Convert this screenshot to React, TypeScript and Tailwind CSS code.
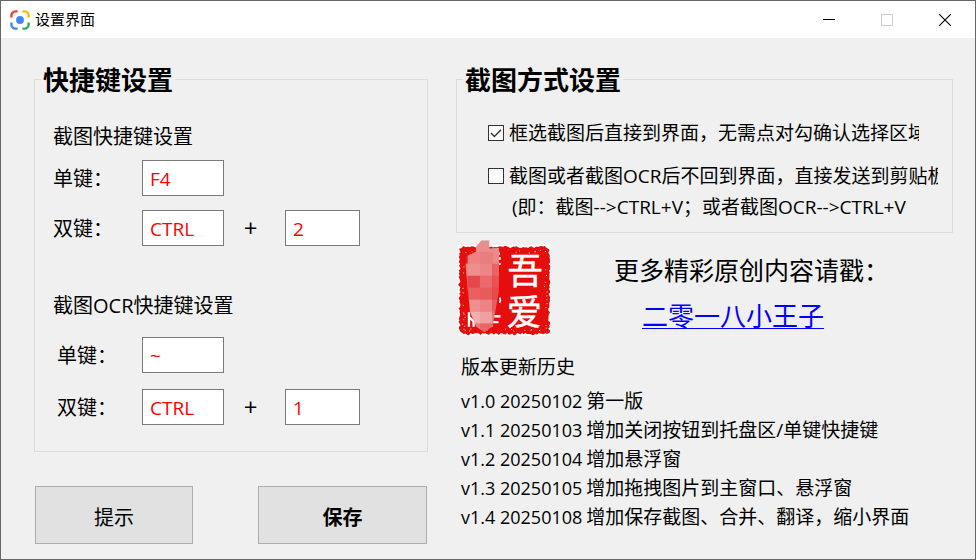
import React, { useState } from "react";

const textFont =
  "font-['Open_Sans','Noto_Sans_CJK_SC',sans-serif]";

function LensIcon() {
  return (
    <svg className="size-5 shrink-0" viewBox="0 0 20 20" fill="none" strokeWidth="2.4" aria-hidden="true">
      <path d="M1.4 7.4V5.4a4 4 0 0 1 4-4h2.2" stroke="#ea4335" />
      <path d="M12.4 1.4h2.2a4 4 0 0 1 4 4v2" stroke="#fbbc04" />
      <path d="M1.4 12.4v2.2a4 4 0 0 0 4 4h2.2" stroke="#4285f4" />
      <path d="M12.4 18.6h2.2a4 4 0 0 0 4-4v-2.2" stroke="#34a853" />
      <circle cx="10" cy="10" r="3.9" fill="#4285f4" />
    </svg>
  );
}

function noise(n: number) {
  const v = Math.sin(n * 12.9898) * 43758.5453;
  return v - Math.floor(v);
}

// Outline of the stamp, with an uneven carved edge.
function stampEdge() {
  const x0 = 25, y0 = 32, x1 = 302, y1 = 301;
  const pts: string[] = [];
  let n = 1;
  for (let x = x0 + 10; x < x1 - 8; x += 5) pts.push(`${x},${y0 + noise(n++) * 7}`);
  for (let y = y0 + 10; y < y1 - 8; y += 5) pts.push(`${x1 - noise(n++) * 7},${y}`);
  for (let x = x1 - 10; x > x0 + 8; x -= 5) pts.push(`${x},${y1 - noise(n++) * 7}`);
  for (let y = y1 - 10; y > y0 + 8; y -= 5) pts.push(`${x0 + noise(n++) * 7},${y}`);
  return pts.join(" ");
}

const specks = Array.from({ length: 46 }, (_, i) => {
  const t = noise(i + 700);
  const d = 8 + noise(i + 800) * 8;
  const side = i % 4;
  const x = side === 0 ? 28 + d : side === 1 ? 299 - d : 36 + t * 256;
  const y = side === 2 ? 36 + d : side === 3 ? 296 - d : 42 + t * 248;
  return { x, y };
});

const mosaic = [
  ["#e98e8e", "#e98e8e", "#e98e8e", "#e98e8e"],
  ["#e11b1b", "#ee8283", "#ea7d7e", "#ec8a8a"],
  ["#ee8787", "#ef8e8f", "#ee8485", "#e96465"],
  ["#ec7273", "#e6474a", "#ea6a6c", "#e85254"],
  ["#ec7e7f", "#ea5f61", "#e85a5c", "#e64a4c"],
  ["#ef9293", "#f08f90", "#ee8384", "#ea5c5e"],
  ["#f0a0a1", "#f2adae", "#f0a0a1", "#e97072"],
  ["#e85e60", "#ec7a7b", "#ea6567", "#e33b3d"],
];

function Stamp() {
  return (
    <svg className="h-24 w-[93px] shrink-0" viewBox="24 15 280 288" role="img" aria-label="吾爱">
      <defs>
        <clipPath id="smudge">
          <path d="M95 15h23v25l30-2-1 132-19 105-25 17-25-17-18-45-8-80-7-85 33-15V35z" />
        </clipPath>
      </defs>
      <rect x="24" y="30" width="279" height="273" fill="#fff" />
      <polygon points={stampEdge()} fill="#e60d0d" />
      {specks.map((s, i) => (
        <rect key={i} x={s.x} y={s.y} width="3" height="3" fill="#fbdcdc" />
      ))}
      <path d="M57 232v44M57 246l14 14v16M84 250v26M126 250v26M118 244h34M126 262h20" stroke="#fff" strokeWidth="7" fill="none" />
      <path d="M148 52v8M150 66v8M150 84v6M149 188q5 6 0 16" stroke="#fff" strokeWidth="5" fill="none" />
      <g clipPath="url(#smudge)">
        {mosaic.map((row, r) =>
          row.map((c, i) => (
            <rect key={`${r}-${i}`} x={16 + i * 37} y={14 + r * 36} width="38" height="37" fill={c} />
          ))
        )}
      </g>
      <g fill="#fff" stroke="#fff" strokeWidth="1.5" fontSize="106" fontWeight="400" className={textFont}>
        <text x="173" y="146">吾</text>
        <text x="171" y="271">爱</text>
      </g>
    </svg>
  );
}

function KeyInput({ label, value, narrow }: { label: string; value: string; narrow?: boolean }) {
  return (
    <input
      aria-label={label}
      defaultValue={value}
      className={`h-9 border border-[#7a7a7a] bg-white px-[7px] pt-0.5 text-[19px] text-[#ff0000] outline-none ${narrow ? "w-[75px]" : "w-[82px]"}`}
    />
  );
}

function KeyRow({ name, keys, indent }: { name: string; keys: string[]; indent?: boolean }) {
  return (
    <div className="flex items-center">
      <span className={`w-[89px] shrink-0 pt-0.5 text-[20px] leading-7 ${indent ? "pl-1" : ""}`}>{name}</span>
      <KeyInput label={name} value={keys[0]} />
      {keys[1] && (
        <>
          <span className="w-[61px] pr-2 text-center text-[24px] leading-7">+</span>
          <KeyInput label={`${name}2`} value={keys[1]} narrow />
        </>
      )}
    </div>
  );
}

function Option({ text, checked, width }: { text: string; checked: boolean; width: string }) {
  const [on, setOn] = useState(checked);
  return (
    <label className="flex items-center gap-[5px]">
      <span className="relative size-4 shrink-0">
        <input
          type="checkbox"
          checked={on}
          onChange={(e) => setOn(e.target.checked)}
          className="block size-4 appearance-none border border-[#333] bg-white"
        />
        {on && (
          <svg className="pointer-events-none absolute inset-0 size-4" viewBox="0 0 16 16" fill="none" stroke="#333" strokeWidth="1.4" aria-hidden="true">
            <path d="M3 8l3.4 3.5L13 4.8" />
          </svg>
        )}
      </span>
      <span className={`overflow-hidden text-[19px] leading-7 whitespace-nowrap ${width}`}>{text}</span>
    </label>
  );
}

const history = [
  ["v1.0 20250102", "第一版"],
  ["v1.1 20250103", "增加关闭按钮到托盘区/单键快捷键"],
  ["v1.2 20250104", "增加悬浮窗"],
  ["v1.3 20250105", "增加拖拽图片到主窗口、悬浮窗"],
  ["v1.4 20250108", "增加保存截图、合并、翻译，缩小界面"],
];

const legendStyle = "ml-[6px] px-0.5 pt-px text-[26px] leading-8 font-bold";

export default function App() {
  return (
    <div lang="zh-CN" className={`flex min-h-screen flex-col border border-[#666] bg-[#f0f0f0] text-black ${textFont}`}>
      <header className="flex h-[37px] items-center bg-white pr-px pl-[9px]">
        <LensIcon />
        <h1 className="ml-[5px] flex-1 pb-0.5 text-[15px] leading-5">设置界面</h1>
        <button aria-label="最小化" className="flex h-full w-[58px] items-center justify-center">
          <svg className="size-3" viewBox="0 0 12 12" stroke="#000" aria-hidden="true"><path d="M0 5.5h12" /></svg>
        </button>
        <button aria-label="最大化" disabled className="flex h-full w-[58px] items-center justify-center">
          <svg className="size-3" viewBox="0 0 12 12" fill="none" stroke="#ccc" aria-hidden="true"><path d="M.5.5h11v11H.5z" /></svg>
        </button>
        <button aria-label="关闭" className="flex h-full w-[58px] items-center justify-center">
          <svg className="size-3" viewBox="0 0 12 12" stroke="#000" strokeWidth="1.1" aria-hidden="true"><path d="M.3.3l11.4 11.4M11.7.3L.3 11.7" /></svg>
        </button>
      </header>

      <main className="grid flex-1 grid-cols-[394fr_497fr] gap-7 pt-[25px] pr-[22px] pb-[15px] pl-[33px]">
        <div className="flex flex-col">
          <fieldset className="border border-[#dcdcdc] pb-[26px]">
            <legend className={legendStyle}>快捷键设置</legend>
            <div className="flex flex-col gap-[46px] pt-[27px] pl-[18px]">
              <section>
                <h2 className="text-[20px] leading-7">截图快捷键设置</h2>
                <div className="mt-[9px] flex flex-col gap-[14px]">
                  <KeyRow name="单键：" keys={["F4"]} />
                  <KeyRow name="双键：" keys={["CTRL", "2"]} />
                </div>
              </section>
              <section>
                <h2 className="text-[20px] leading-7">截图OCR快捷键设置</h2>
                <div className="mt-[17px] flex flex-col gap-4">
                  <KeyRow name="单键：" keys={["~"]} indent />
                  <KeyRow name="双键：" keys={["CTRL", "1"]} indent />
                </div>
              </section>
            </div>
          </fieldset>
          <div className="mt-[34px] flex justify-between px-px">
            <button className="h-[58px] w-[158px] border border-[#adadad] bg-[#e1e1e1] pt-[5px] text-[20px]">提示</button>
            <button className="h-[58px] w-[169px] border border-[#adadad] bg-[#e1e1e1] pt-[5px] text-[20px] font-bold">保存</button>
          </div>
        </div>

        <div>
          <fieldset className="border border-[#dcdcdc] pb-[11px]">
            <legend className={legendStyle}>截图方式设置</legend>
            <div className="pt-[23px] pl-[31px]">
              <Option text="框选截图后直接到界面，无需点对勾确认选择区域" checked width="w-[410px]" />
              <div className="mt-[15px]">
                <Option text="截图或者截图OCR后不回到界面，直接发送到剪贴板" checked={false} width="w-[429px]" />
              </div>
              <p className="pt-[3px] pl-6 text-[19px] leading-7">(即：截图--&gt;CTRL+V；或者截图OCR--&gt;CTRL+V</p>
            </div>
          </fieldset>

          <section className="mt-[7px] flex gap-[63px] pl-0.5">
            <Stamp />
            <div className="pt-3">
              <p className="text-[25px] leading-9">更多精彩原创内容请戳：</p>
              <a href="#author" className="mt-[10px] ml-7 block w-fit text-[26px] leading-9 text-[#0000ff] underline decoration-1 underline-offset-2">
                二零一八小王子
              </a>
            </div>
          </section>

          <section className="mt-[17px] pl-[5px] text-[19px]">
            <h2 className="leading-7">版本更新历史</h2>
            <ul className="mt-[6px] leading-[29px]">
              {history.map(([version, note]) => (
                <li key={version} className="flex items-baseline gap-1">
                  <span className="text-[18px]">{version}</span>
                  <span>{note}</span>
                </li>
              ))}
            </ul>
          </section>
        </div>
      </main>
    </div>
  );
}
